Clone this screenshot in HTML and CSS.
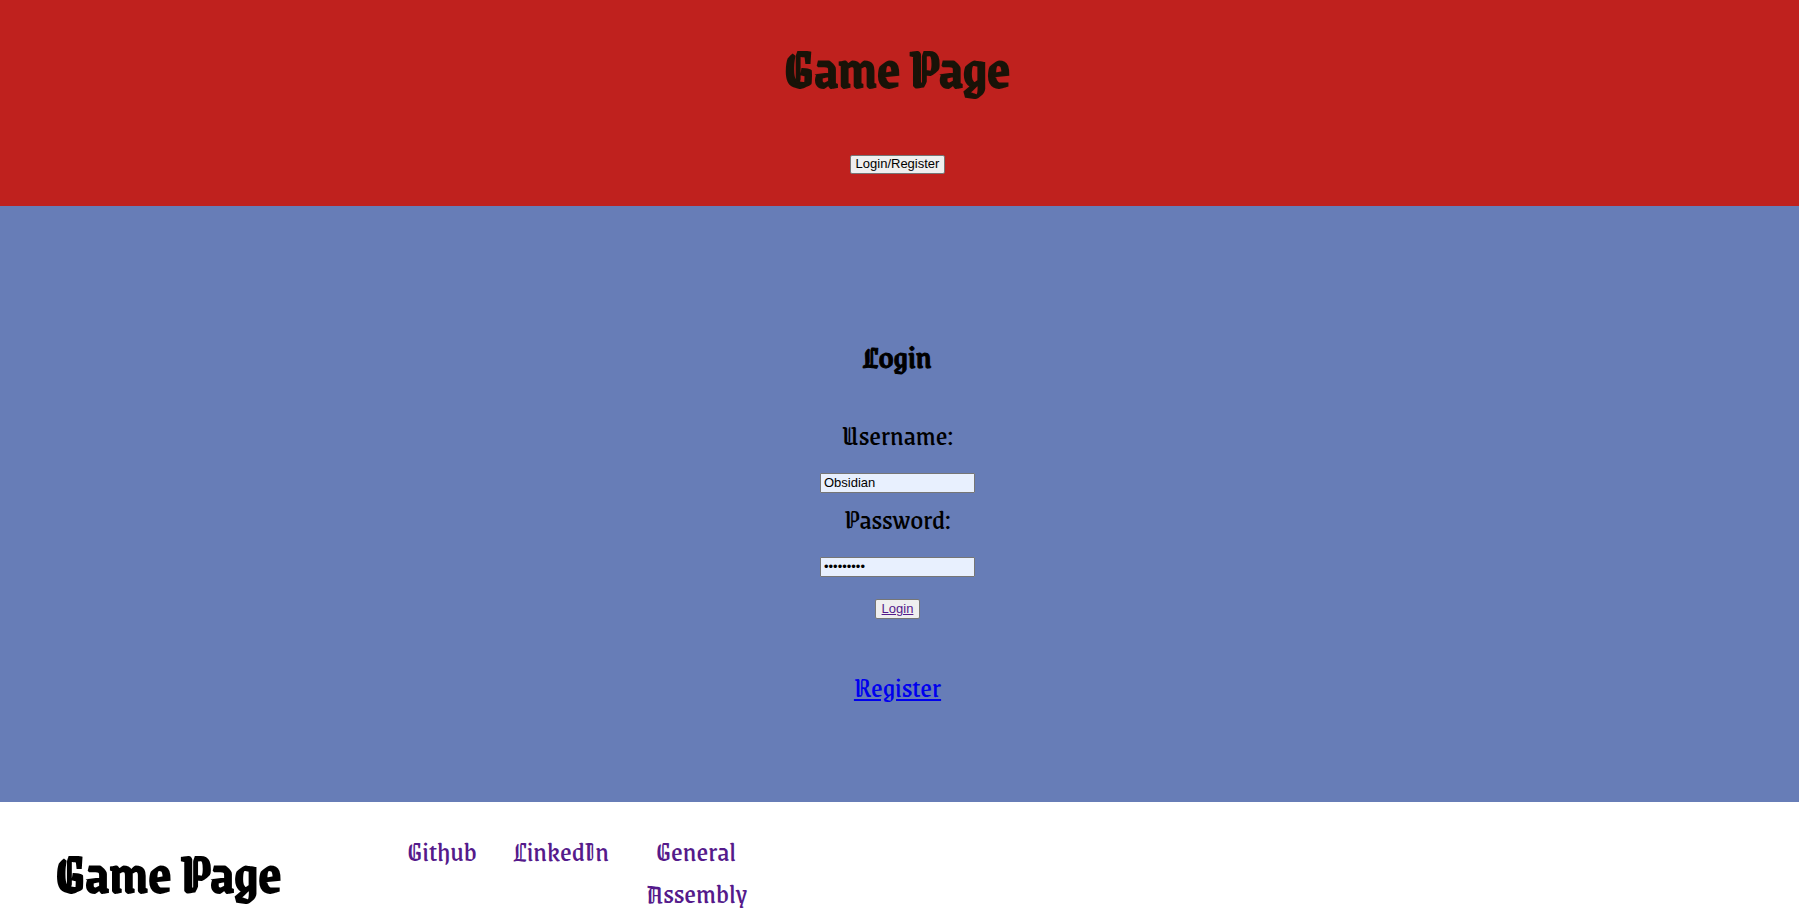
FILE: index.html
```html
<!DOCTYPE html>
<html lang="en">
<head>
<meta charset="utf-8">
<title>Game Page</title>
<link rel="stylesheet" href="styles.css">
</head>
<body>
<header class="header">
  <h1 class="title">Game Page</h1>
  <button class="button" type="button">Login/Register</button>
</header>
<main class="main">
  <h2 class="heading">Login</h2>
  <form class="form">
    <label for="username">Username:</label>
    <input class="field" id="username" type="text" value="Obsidian">
    <label for="password">Password:</label>
    <input class="field" id="password" type="password" value="obsidian1">
    <button class="button submit" type="submit">Login</button>
  </form>
  <a class="register" href="#register">Register</a>
</main>
<footer class="footer">
  <h1 class="title brand">Game Page</h1>
  <nav class="links">
    <a href="#github">Github</a>
    <a href="#linkedin">LinkedIn</a>
    <a class="assembly" href="#assembly">General Assembly</a>
  </nav>
</footer>
</body>
</html>
```
FILE: styles.css
```css
* {
  box-sizing: border-box;
}

body {
  margin: 0;
  background: #fff;
  color: #000;
  font-family: "Grenze Gotisch", "Liberation Serif", serif;
  font-size: 29px;
  line-height: 42px;
}

.header,
.main,
.form {
  display: flex;
  flex-direction: column;
  align-items: center;
}

.header {
  gap: 67px;
  padding: 46px 4px 32px 0;
  background: #bf211e;
  color: #191308;
}

.title {
  margin: 0;
  font-size: 56px;
  font-weight: 500;
  -webkit-text-stroke: 2px currentColor;
}

.button {
  height: 19px;
  padding: 0 5px 1px;
  border: 1px solid #767676;
  border-radius: 2px;
  background: #efefef;
  color: #000;
  font: 13px/16px "Liberation Sans", Arial, sans-serif;
}

.main {
  padding: 130px 4px 94px 0;
  background: #677db7;
}

.heading {
  margin: 0 0 36px;
  font-size: 33px;
  font-weight: 500;
  -webkit-text-stroke: 1px currentColor;
}

.field {
  width: 155px;
  height: 20px;
  margin: 17px 0 5px;
  padding: 0 3px 1px;
  border: 1px solid #767676;
  border-radius: 1px;
  background: #e8f0fe;
  color: #000;
  font: 13px/16px "Liberation Sans", Arial, sans-serif;
}

.submit {
  height: 20px;
  margin: 17px 0 47px;
  padding: 0 6px;
  color: #551a8b;
  text-decoration: underline;
}

.register {
  color: #00e;
}

.footer {
  display: flex;
  align-items: flex-start;
  padding: 28px 56px 0;
}

.brand {
  margin-top: 21px;
}

.links {
  display: flex;
  gap: 37px;
  margin-left: 126px;
  text-align: center;
}

.links a {
  color: #551a8b;
  text-decoration: none;
}

.assembly {
  width: 100px;
}
```
